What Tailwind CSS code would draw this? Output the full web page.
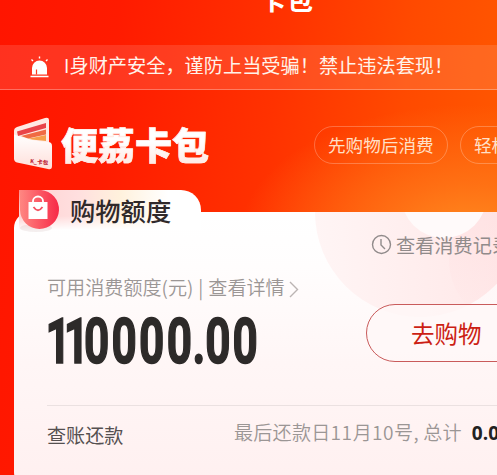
<!DOCTYPE html>
<html lang="zh-CN">
<head>
<meta charset="utf-8">
<title>卡包</title>
<script src="https://cdn.jsdelivr.net/npm/@tailwindcss/browser@4"></script>
</head>
<body class="w-[497px] h-[475px] overflow-hidden font-['Noto_Sans_CJK_SC',sans-serif]">
<div class="w-[497px] h-[475px] overflow-hidden flex flex-col whitespace-nowrap bg-[radial-gradient(ellipse_230px_130px_at_470px_235px,#ff8a20_0%,#ff7d1cb0_40%,#ff6a0000_100%),linear-gradient(96deg,#ff1500_0%,#ff1b00_22%,#ff3200_52%,#ff4a00_76%,#ff5a00_100%)]">
  <header class="h-[45px] shrink-0 pl-[259px]">
    <h1 class="text-[27px] leading-[40px] -mt-[21px] font-bold text-white">卡包</h1>
  </header>
  <div class="h-[45px] shrink-0 flex items-center pl-[30px] bg-white/12 border-b border-white/30 text-[#fff3ea]">
    <svg class="w-[19px] h-[23px] shrink-0" viewBox="0 0 19 23" fill="none">
      <path d="M2 18.500V12a7.500 7.500 0 0 1 15 0v6.500z" fill="#fff"/>
      <path d="M6.500 18.500v-5" stroke="#ff3b20" stroke-width="1.200"/>
      <path d="M.5 20.500h18M9.500.5v2M1.500 3.500l1.500 1.500M17.500 3.500 16 5" stroke="#fff" stroke-width="1.400"/>
    </svg>
    <span class="ml-[15px] mt-[-4px] w-[5.500px] text-[18px] leading-[28px]">I</span>
    <span class="text-[19.200px] leading-[28px] -mt-[4px]">身财产安全，谨防上当受骗！禁止违法套现！</span>
  </div>
  <section class="h-[100px] shrink-0 flex pl-[13px] pt-[27px]">
    <svg class="w-[41px] h-[54px] shrink-0" viewBox="0 0 41 54">
      <defs><linearGradient id="w" x2="0" y2="1"><stop stop-color="#fff"/><stop offset="1" stop-color="#ffdfda"/></linearGradient></defs>
      <path d="M1 14Q1 11 4 10L32 1q4-1 4 2v35L1 40z" fill="#ffe9e3"/>
      <path d="M4 14.500 33 6v5L5 19z" fill="#e94449"/>
      <path d="m8 19 25-6.500v5l-18 4z" fill="#f06b43"/>
      <path d="m14 22 19-4v6z" fill="#f5a04b"/>
      <path d="M1 17.500Q18 24 35 25q4 0 4 4v20q0 4-4 3L4 45.500q-3-1-3-4z" fill="url(#w)"/>
      <text x="17" y="46" font-size="5.500" font-weight="900" fill="#bf293b" transform="rotate(6 17 46)">K_卡包</text>
    </svg>
    <div class="ml-[7px] mt-[4px] text-[37px] leading-[46px] font-black bg-linear-to-b from-white from-30% to-[#ffd0c5] bg-clip-text text-transparent [-webkit-text-stroke:.6px_#fff0eb]">便荔卡包</div>
    <div class="ml-[105px] mt-[9px] h-[38px] w-[134px] shrink-0 rounded-full border border-white/25 text-[#ffe0c8] text-[17.600px] leading-[36px] pl-[13px]">先购物后消费</div>
    <div class="ml-[12px] mt-[9px] h-[38px] w-[134px] shrink-0 rounded-full border border-white/25 text-[#ffe0c8] text-[17.600px] leading-[36px] pl-[13px]">轻松</div>
  </section>
  <main class="relative h-[285px] shrink-0">
    <div class="absolute left-[14px] top-[22px] right-0 h-[276px] rounded-l-[16px] overflow-hidden bg-[linear-gradient(#fff_0%,#fffdfd_20%,#fff6f6_55%,#fff0f0_100%)]">
      <svg class="absolute inset-0 w-[483px] h-[270px]" viewBox="14 212 483 270">
        <defs><linearGradient id="ring" x1="0" x2="1"><stop stop-color="#fff5f5"/><stop offset="1" stop-color="#ffe6e6"/></linearGradient>
        <linearGradient id="fade" x2="0" y2="1"><stop stop-color="#ffd9dc" stop-opacity=".4"/><stop offset="1" stop-color="#ffd9dc" stop-opacity="0"/></linearGradient></defs>
        <circle cx="420" cy="212" r="105" fill="url(#ring)"/>
        <circle cx="515" cy="260" r="66" fill="url(#fade)"/>
        <circle cx="444" cy="195" r="43" fill="#fffafa"/>
        <rect x="367" y="305" width="180" height="56" rx="28" fill="#fff7f7" fill-opacity=".8"/>
      </svg>
    </div>
    <div class="absolute left-[19px] top-0 w-[182px] h-[40px] rounded-tl-[3px] rounded-tr-[20px] bg-[linear-gradient(90deg,#ffd0d0_0%,#ffdfdf_32%,#fff1dc_55%,#fff_82%)]"></div>
    <div class="absolute left-[19px] top-[26px] w-[182px] h-[14px] bg-linear-to-b from-white/0 to-white"></div>
    <svg class="absolute left-[18px] top-0 w-[44px] h-[44px]" viewBox="0 0 44 44">
      <defs><linearGradient id="badge"><stop stop-color="#ff8983"/><stop offset="1" stop-color="#f72947"/></linearGradient></defs>
      <ellipse cx="18" cy="38" rx="16" ry="4" fill="#6e3030" fill-opacity=".08"/>
      <path d="M1 0H23A19.500 19.500 0 1 1 2 20z" fill="url(#badge)"/>
      <path d="M10.500 12h19v17h-19z" fill="#fff"/>
      <path d="M15 13v-2a5 4.500 0 0 1 10 0v2" fill="none" stroke="#fff" stroke-width="1.800"/>
      <path d="M15.500 17q4.500 6.500 9 0" fill="none" stroke="#f45261" stroke-width="1.800"/>
    </svg>
    <div class="relative h-full">
      <h2 class="h-[38px] pl-[70px] text-[25.300px] leading-[40px] font-medium text-[#30292a]">购物额度</h2>
      <div class="h-[42px] flex items-center pl-[371px] text-[#918b8b] text-[19.200px] leading-[28px] mt-[-5px]">
        <svg class="w-[21px] h-[21px] shrink-0 mr-[4px]" viewBox="0 0 21 21" fill="none" stroke="#918b8b" stroke-width="1.400"><circle cx="10.500" cy="10.500" r="9"/><path d="M10 5v6l4 4"/></svg>
        <span class="mt-[1px]">查看消费记录</span>
      </div>
      <div class="mt-[8px] h-[28px] flex items-center pl-[47px] text-[#9b9695] text-[19.100px] leading-[28px] font-[350]">
        <span>可用消费额度(元)</span><span class="w-[15px] text-center">|</span><span>查看详情</span>
        <svg class="w-[10px] h-[17px] ml-[4px] mt-[4px]" viewBox="0 0 10 17" fill="none" stroke="#bbb4b3" stroke-width="1.400"><path d="m1 1 7.500 7.500L1 16"/></svg>
      </div>
      <div class="h-[105px] pl-[47px] flex items-start">
        <svg class="w-[220px] h-[72px] shrink-0" viewBox="0 8 220 72">
          <g transform="translate(0 69.500) scale(.7 1)" font-family="Roboto, sans-serif" font-weight="700" font-size="63" fill="#2d2a29" stroke="#2d2a29" stroke-width="1.600">
            <text x="-2 24 53 92 131.500 171 208 226 265" y="0">110000.00</text>
          </g>
        </svg>
        <button class="ml-[99px] mt-[3px] w-[180px] h-[58px] shrink-0 rounded-full border border-[#c95b5b] text-left pl-[44px] text-[23.500px] leading-[54px] text-[#cc1f14]">去购物</button>
      </div>
      <div class="ml-[47px] border-t border-[#ebe1e1] h-[60px] flex pt-[14px] mt-[-1px] text-[19.100px] leading-[28px]">
        <span class="w-[187px] shrink-0 mt-[1px] text-[#555050]">查账还款</span>
        <span class="text-[#9b9695] font-[350] -mt-[2px] shrink-0 tracking-[.2px]">最后还款日<span class="tracking-[.6px]">11</span>月<span class="tracking-[.6px]">10</span>号, 总计</span>
        <span class="ml-[10px] -mt-[1px] shrink-0 font-bold text-[#222] font-['Open_Sans',sans-serif]">0.00</span>
      </div>
    </div>
  </main>
</div>
</body>
</html>
